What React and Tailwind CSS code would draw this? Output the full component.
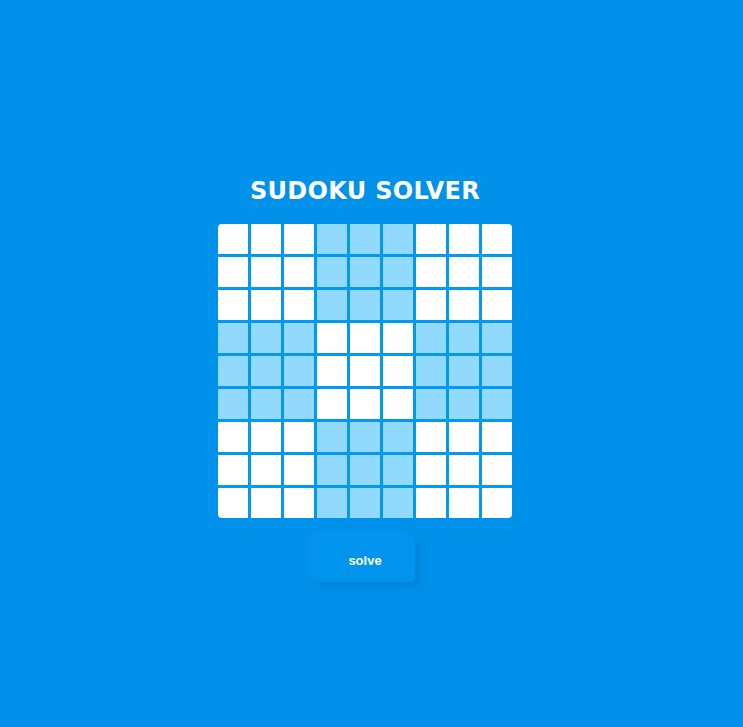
import React from 'react';

const Cell = ({ row, col }) => {
    const boxRow = Math.floor(row / 3);
    const boxCol = Math.floor(col / 3);
    const shaded = (boxRow + boxCol) % 2 === 1;
    return <input className={`h-[30px] w-[30px] border-0 text-center text-base outline-none ${shaded ? 'bg-[#91d9fd]' : 'bg-white'}`} />;
};

const App = () => {
    const cells = [];
    for (let r = 0; r < 9; r++) {
        for (let c = 0; c < 9; c++) {
            cells.push(<Cell key={`${r}-${c}`} row={r} col={c} />);
        }
    }

    return (
        <div className="min-h-[727px] w-full bg-[#0091ea] font-['Liberation_Sans',sans-serif]">
            <div className="flex w-[730px] flex-col items-center pt-[176px]">
                <h1 className="font-['DejaVu_Sans',sans-serif] text-[24px] font-bold leading-[30px] tracking-[0.3px] text-white">SUDOKU SOLVER</h1>
                <div className="mt-[18px] grid grid-cols-[repeat(9,30px)] gap-[3px] overflow-hidden rounded-[4px] bg-[#0399ef]">
                    {cells}
                </div>
                <button className="mt-[20px] h-[44px] w-[100px] rounded-[4px] bg-[#0094ec] pt-[2px] text-[13px] font-bold text-white shadow-[4px_4px_10px_rgba(0,60,120,0.18),-4px_-4px_10px_rgba(40,170,255,0.35)]">
                    solve
                </button>
            </div>
        </div>
    );
};

export default App;
